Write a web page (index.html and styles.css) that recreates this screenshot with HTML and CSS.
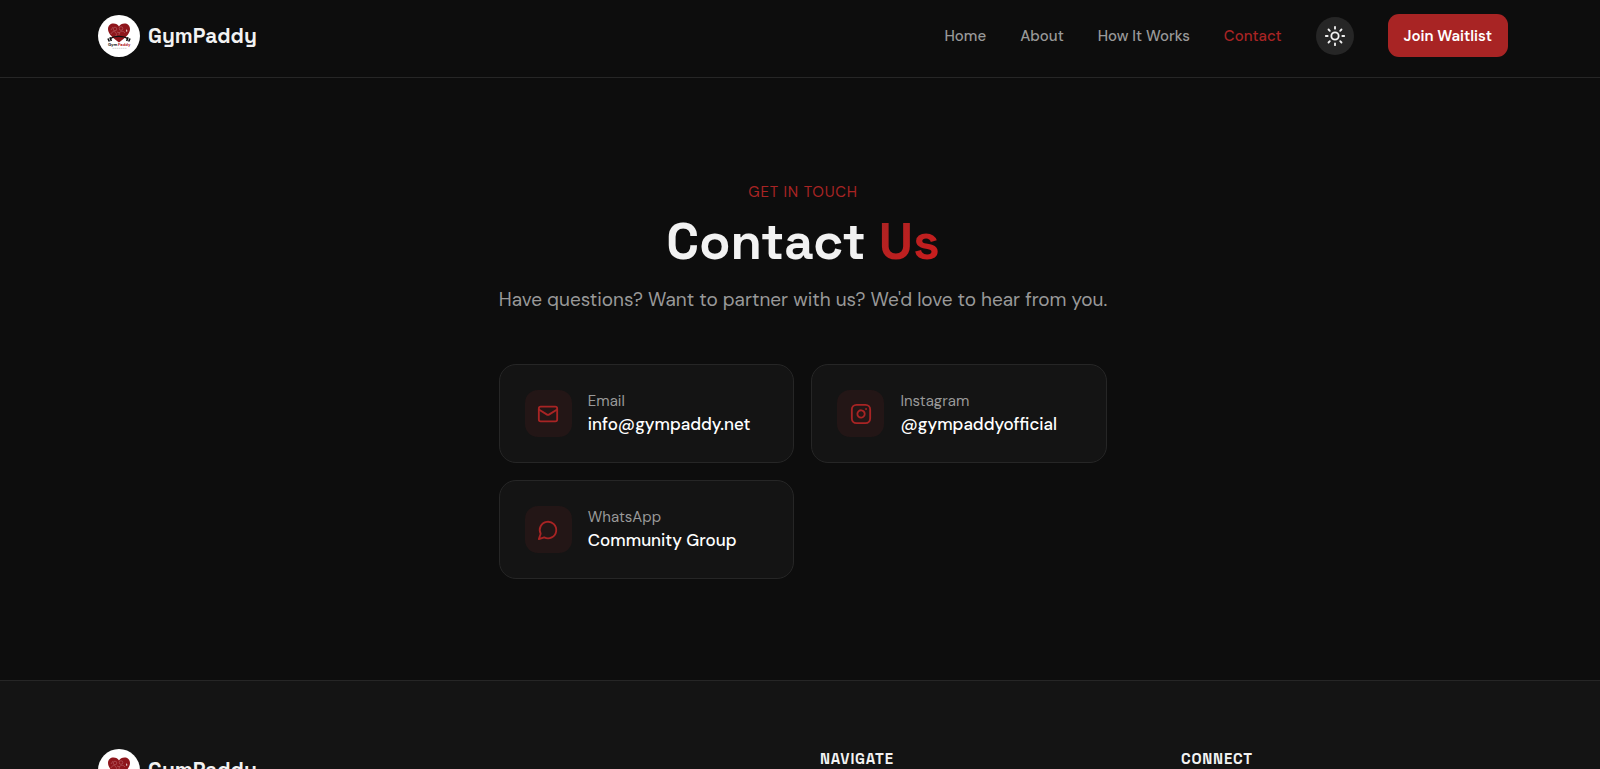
FILE: index.html
```html
<!DOCTYPE html>
<html lang="en">
<head>
    <meta charset="UTF-8">
    <meta name="viewport" content="width=device-width, initial-scale=1.0">
    <title>GymPaddy - Contact Us</title>
    <link rel="stylesheet" href="styles.css">
</head>
<body>
    <!-- Logo artwork, used in the header and the footer -->
    <svg class="sprite" aria-hidden="true">
        <symbol id="logo" viewBox="0 0 42 42">
            <circle cx="21" cy="21" r="21" fill="#fff"/>
            <path d="M21 27.500C16 23.500 10 19.500 10 14C10 10.500 12.500 8.500 15.500 8.500C18 8.500 20 9.800 21 11.500C22 9.800 24 8.500 26.500 8.500C29.500 8.500 32 10.500 32 14C32 19.500 26 23.500 21 27.500Z" fill="#8f161c"/>
            <g fill="none" stroke="#b9666b" stroke-width="0.600">
                <circle cx="17" cy="14" r="1.800"/>
                <circle cx="23" cy="13.500" r="1.800"/>
                <path d="M13 19C14 16 17 16 18 18S19 21 17 21M21 20C21 16 25 15 27 18M15 12L13 15M19 17L22 18"/>
            </g>
            <path d="M28 14L29.500 16L28.500 17Z" fill="#fff"/>
            <path d="M12 24C16 20.500 26 20.500 30 24" fill="none" stroke="#111" stroke-width="1.200"/>
            <path d="M10 23.500L11.300 26.500M12 22.300L13.300 26M32 23.500L30.700 26.500M30 22.300L28.700 26" stroke="#111" stroke-width="1.600"/>
            <text x="10" y="31" class="logo-word" fill="#111">Gym</text>
            <text x="20" y="31" class="logo-word" fill="#b3181f">Paddy</text>
            <path d="M14.500 33.300H29" stroke="#bbb" stroke-width="0.600" stroke-dasharray="1.500 0.500"/>
        </symbol>
    </svg>

    <header class="header">
        <div class="container header-inner">
            <a href="#" class="brand">
                <svg class="brand-logo" aria-hidden="true"><use href="#logo"/></svg>
                <span class="brand-name">GymPaddy</span>
            </a>
            <nav class="nav">
                <a href="#" class="nav-link">Home</a>
                <a href="#" class="nav-link">About</a>
                <a href="#" class="nav-link">How It Works</a>
                <a href="#" class="nav-link active">Contact</a>
                <button type="button" class="theme-btn" aria-label="Toggle theme">
                    <svg class="icon" viewBox="0 0 24 24">
                        <circle cx="12" cy="12" r="4"/>
                        <path d="M12 2v2M12 20v2M4.930 4.930l1.410 1.410M17.660 17.660l1.410 1.410M2 12h2M20 12h2M6.340 17.660l-1.410 1.410M19.070 4.930l-1.410 1.410"/>
                    </svg>
                </button>
                <button type="button" class="join-btn">Join Waitlist</button>
            </nav>
        </div>
    </header>

    <main class="container contact">
        <div class="contact-inner">
            <p class="eyebrow">GET IN TOUCH</p>
            <h1>Contact <span class="accent">Us</span></h1>
            <p class="lead">Have questions? Want to partner with us? We'd love to hear from you.</p>

            <div class="cards">
                <a href="#" class="card">
                    <span class="card-icon">
                        <svg class="icon" viewBox="0 0 24 24">
                            <rect x="2" y="4" width="20" height="16" rx="2"/>
                            <path d="m22 7-8.970 5.700a1.940 1.940 0 0 1-2.060 0L2 7"/>
                        </svg>
                    </span>
                    <span class="card-text">
                        <span class="card-label">Email</span>
                        <span class="card-value">info@gympaddy.net</span>
                    </span>
                </a>
                <a href="#" class="card">
                    <span class="card-icon">
                        <svg class="icon" viewBox="0 0 24 24">
                            <rect x="2" y="2" width="20" height="20" rx="5"/>
                            <path d="M16 11.370A4 4 0 1 1 12.630 8 4 4 0 0 1 16 11.370z"/>
                            <path d="M17.500 6.500h.01"/>
                        </svg>
                    </span>
                    <span class="card-text">
                        <span class="card-label">Instagram</span>
                        <span class="card-value">@gympaddyofficial</span>
                    </span>
                </a>
                <a href="#" class="card">
                    <span class="card-icon">
                        <svg class="icon" viewBox="0 0 24 24">
                            <path d="M7.900 20A9 9 0 1 0 4 16.100L2 22Z"/>
                        </svg>
                    </span>
                    <span class="card-text">
                        <span class="card-label">WhatsApp</span>
                        <span class="card-value">Community Group</span>
                    </span>
                </a>
            </div>
        </div>
    </main>

    <footer class="footer">
        <div class="container footer-grid">
            <div class="footer-brand">
                <a href="#" class="brand">
                    <svg class="brand-logo" aria-hidden="true"><use href="#logo"/></svg>
                    <span class="brand-name">GymPaddy</span>
                </a>
            </div>
            <h2 class="footer-title">NAVIGATE</h2>
            <h2 class="footer-title">CONNECT</h2>
        </div>
    </footer>
</body>
</html>
```
FILE: styles.css
```css
* {
    box-sizing: border-box;
}

body {
    margin: 0;
    background-color: #0d0d0d;
    color: #f2f2f2;
    font-family: "DM Sans", Inter, sans-serif;
    font-size: 15px;
    line-height: 22px;
}

a {
    color: inherit;
    text-decoration: none;
}

h1,
h2,
p {
    margin: 0;
}

.sprite {
    display: none;
}

.container {
    padding-left: 98px;
    padding-right: 92px;
}

.icon {
    width: 22px;
    height: 22px;
    fill: none;
    stroke: currentColor;
    stroke-width: 2;
    stroke-linecap: round;
    stroke-linejoin: round;
}

/* Header */
.header {
    padding: 14px 0 20px;
    border-bottom: 1px solid #262626;
}

.header-inner {
    display: flex;
    align-items: center;
    justify-content: space-between;
}

.brand {
    display: inline-flex;
    align-items: center;
    gap: 8px;
}

.brand-logo {
    width: 42px;
    height: 42px;
}

.logo-word {
    font-size: 4px;
    font-weight: 800;
}

.brand-name {
    font-family: "Space Grotesk", Inter, sans-serif;
    font-size: 21px;
    font-weight: 700;
    line-height: 30px;
}

.nav {
    display: flex;
    align-items: center;
    gap: 34px;
}

.nav-link {
    color: #999;
    font-weight: 500;
}

.nav-link.active {
    color: #a82424;
}

.theme-btn {
    display: flex;
    align-items: center;
    justify-content: center;
    width: 38px;
    height: 38px;
    padding: 0;
    border: none;
    border-radius: 50%;
    background-color: #262626;
    color: #f2f2f2;
    cursor: pointer;
}

.join-btn {
    height: 43px;
    padding: 0 16px;
    border: none;
    border-radius: 11px;
    background-color: #a82424;
    color: #fff;
    font: inherit;
    font-weight: 600;
    cursor: pointer;
}

/* Contact section */
.contact {
    display: flex;
    justify-content: center;
    padding-top: 103px;
    padding-bottom: 101px;
}

.contact-inner {
    text-align: center;
}

.eyebrow {
    color: #a82424;
    letter-spacing: 0.05em;
}

h1 {
    margin-top: 12px;
    font-family: "Space Grotesk", Inter, sans-serif;
    font-size: 51px;
    font-weight: 700;
    line-height: 54px;
}

.accent {
    background: linear-gradient(135deg, #a82424, #cf1c1c);
    background-clip: text;
    -webkit-background-clip: text;
    color: transparent;
}

.lead {
    margin-top: 16px;
    color: #999;
    font-size: 19px;
    line-height: 30px;
}

.cards {
    display: grid;
    grid-template-columns: 1fr 1fr;
    gap: 17px;
    margin-top: 49px;
    text-align: left;
}

.card {
    display: flex;
    align-items: center;
    gap: 16px;
    padding: 25px;
    border: 1px solid #262626;
    border-radius: 17px;
    background-color: #141414;
}

.card-icon {
    display: flex;
    align-items: center;
    justify-content: center;
    width: 47px;
    height: 47px;
    border-radius: 13px;
    background-color: #231616;
    color: #a82424;
}

.card-text {
    display: flex;
    flex-direction: column;
}

.card-label {
    color: #999;
}

.card-value {
    color: #fff;
    font-size: 17px;
    font-weight: 500;
    line-height: 25px;
}

/* Footer */
.footer {
    padding: 68px 0;
    border-top: 1px solid #262626;
    background-color: #141414;
}

.footer-grid {
    display: grid;
    grid-template-columns: repeat(4, 1fr);
    gap: 34px;
}

.footer-brand {
    grid-column: span 2;
}

.footer-title {
    font-family: "Space Grotesk", Inter, sans-serif;
    font-size: 15px;
    font-weight: 700;
    letter-spacing: 0.05em;
    line-height: 20px;
}
```
